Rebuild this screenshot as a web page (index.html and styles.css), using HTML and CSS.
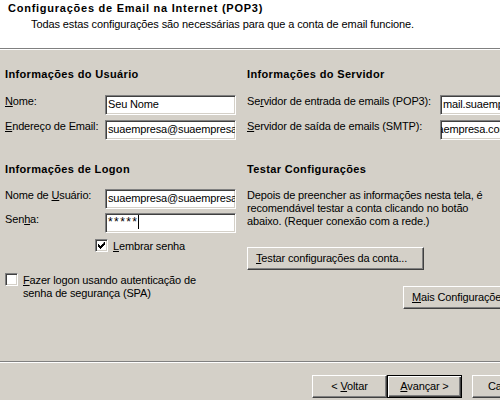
FILE: index.html
```html
<!DOCTYPE html>
<html lang="pt-BR">
<head>
<meta charset="utf-8">
<title>Configurações de Email na Internet (POP3)</title>
<link rel="stylesheet" href="styles.css">
</head>
<body>
<div class="dlg">
  <header class="hdr">
    <div class="title">Configurações de Email na Internet (POP3)</div>
    <div class="sub">Todas estas configurações são necessárias para que a conta de email funcione.</div>
  </header>
  <main class="main">
    <section class="col col-left">
      <h2 class="head">Informações do Usuário</h2>
      <div class="form form-left">
        <label class="lbl"><u>N</u>ome:</label>
        <div class="inp"><span>Seu Nome</span></div>
        <label class="lbl"><u>E</u>ndereço de Email:</label>
        <div class="inp"><span>suaempresa@suaempresa</span></div>
      </div>
      <h2 class="head head-2">Informações de Logon</h2>
      <div class="form form-left form-logon">
        <label class="lbl">Nome de <u>U</u>suário:</label>
        <div class="inp"><span>suaempresa@suaempresa</span></div>
        <label class="lbl">Sen<u>h</u>a:</label>
        <div class="inp"><span class="pwd">*****</span><span class="caret"></span></div>
      </div>
      <div class="chk chk-remember">
        <span class="box"><svg width="7" height="7" viewBox="0 0 7 7"><path d="M6 0h1v3h-1v1h-1v1h-1v1h-1v1h-1v-1h-1v-1h-1v-3h1v1h1v1h1v-1h1v-1h1z" fill="#000"/></svg></span>
        <span class="chk-text"><u>L</u>embrar senha</span>
      </div>
      <div class="chk chk-spa">
        <span class="box"></span>
        <span class="chk-text"><u>F</u>azer logon usando autenticação de<br>senha de segurança (SPA)</span>
      </div>
    </section>
    <section class="col col-right">
      <h2 class="head">Informações do Servidor</h2>
      <div class="form form-right">
        <label class="lbl">Se<u>r</u>vidor de entrada de emails (POP3):</label>
        <div class="inp"><span>mail.suaempresa.com.br</span></div>
        <label class="lbl"><u>S</u>ervidor de saída de emails (SMTP):</label>
        <div class="inp"><span class="scrolled">smtp.suaempresa.com.br</span></div>
      </div>
      <h2 class="head head-2">Testar Configurações</h2>
      <p class="para">Depois de preencher as informações nesta tela, é<br>recomendável testar a conta clicando no botão<br>abaixo. (Requer conexão com a rede.)</p>
      <button class="btn btn-test"><span><u>T</u>estar configurações da conta...</span></button>
      <button class="btn btn-more"><span><u>M</u>ais Configurações...</span></button>
    </section>
  </main>
  <footer class="ftr">
    <button class="btn btn-nav"><span>&lt; <u>V</u>oltar</span></button>
    <button class="btn btn-nav btn-default"><span><u>A</u>vançar &gt;</span></button>
    <button class="btn btn-nav btn-cancel"><span>Cancelar</span></button>
  </footer>
</div>
</body>
</html>
```
FILE: styles.css
```css
* { box-sizing: border-box; }
html, body { margin: 0; padding: 0; }
body {
  width: 500px;
  height: 400px;
  overflow: hidden;
  background: #d4d0c8;
  color: #000;
  font-family: "Liberation Sans", Arial, sans-serif;
  font-size: 11px;
  line-height: 13px;
  letter-spacing: -0.15px;
}
u { text-decoration: underline; text-underline-offset: 1px; }
.dlg {
  width: 560px;
  height: 400px;
  display: flex;
  flex-direction: column;
}
.hdr {
  flex: none;
  height: 49px;
  background: #fff;
  border-bottom: 1px solid #808080;
  padding: 2px 0 0 8px;
}
.title { font-weight: bold; letter-spacing: 0.75px; }
.sub { margin: 3px 0 0 23px; letter-spacing: -0.1px; }

.main {
  flex: none;
  height: 312px;
  border-top: 1px solid #fff;
  display: grid;
  grid-template-columns: 242px 1fr;
  padding-left: 5px;
  overflow: hidden;
}
.col { display: flex; flex-direction: column; align-items: flex-start; }
.head {
  margin: 18px 0 0;
  font-size: 11px;
  line-height: 13px;
  font-weight: bold;
  letter-spacing: 0.35px;
}
.head-2 { margin-top: 23px; }

.form {
  display: grid;
  grid-auto-rows: 20px;
  row-gap: 5px;
  margin-top: 14px;
}
.form-left { grid-template-columns: 100px 131px; }
.form-right { grid-template-columns: 193px 131px; }
.form-logon { margin-top: 13px; row-gap: 4px; }
.lbl { align-self: start; white-space: nowrap; }

.inp {
  height: 20px;
  background: #fff;
  border: 1px solid;
  border-color: #808080 #fff #fff #808080;
  box-shadow: inset 1px 1px 0 #404040, inset -1px -1px 0 #d4d0c8;
  padding: 2px 0 0 2px;
  white-space: nowrap;
  overflow: hidden;
  display: flex;
  align-items: flex-start;
}
.pwd { letter-spacing: 1.4px; font-size: 12px; }
.caret {
  display: inline-block;
  width: 1px;
  height: 14px;
  background: #000;
  margin: -1px 0 0 0;
}
.scrolled { margin-left: -43px; }

.chk { display: flex; align-items: flex-start; gap: 5px; }
.chk-remember { margin: 6px 0 0 90px; }
.chk-spa { margin-top: 20px; }
.box {
  flex: none;
  width: 13px;
  height: 13px;
  background: #fff;
  border: 1px solid;
  border-color: #808080 #fff #fff #808080;
  box-shadow: inset 1px 1px 0 #404040, inset -1px -1px 0 #d4d0c8;
  display: flex;
  align-items: center;
  justify-content: center;
}
.box svg { display: block; }
.chk-text { padding-top: 1px; white-space: nowrap; }

.para { margin: 13px 0 0; white-space: nowrap; }

.btn {
  font: inherit;
  letter-spacing: inherit;
  color: #000;
  background: #d4d0c8;
  height: 23px;
  border: 1px solid;
  border-color: #fff #404040 #404040 #fff;
  box-shadow: inset -1px -1px 0 #808080;
  padding: 0 8px;
  margin: 0;
  white-space: nowrap;
  display: flex;
  align-items: center;
  justify-content: center;
}
.btn-test { margin-top: 19px; width: 177px; justify-content: flex-start; padding-left: 8px; }
.btn-more { margin: 16px 0 0 156px; width: 120px; justify-content: flex-start; padding-left: 8px; }

.ftr {
  flex: none;
  border-top: 1px solid #808080;
  box-shadow: inset 0 1px 0 #fff;
  padding: 13px 13px 0 0;
  display: flex;
  justify-content: flex-end;
  align-items: flex-start;
}
.btn-nav { width: 75px; }
.btn-default {
  border-color: #000;
  box-shadow: inset 1px 1px 0 #fff, inset -1px -1px 0 #404040, inset -2px -2px 0 #808080;
}
.btn-cancel { margin-left: 10px; }
```
